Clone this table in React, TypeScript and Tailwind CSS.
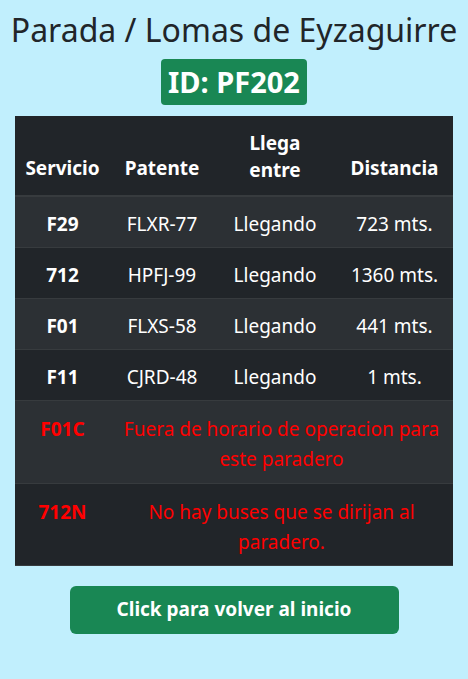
const buses = [
  { servicio: "F29", patente: "FLXR-77", llega: "Llegando", distancia: "723 mts." },
  { servicio: "712", patente: "HPFJ-99", llega: "Llegando", distancia: "1360 mts." },
  { servicio: "F01", patente: "FLXS-58", llega: "Llegando", distancia: "441 mts." },
  { servicio: "F11", patente: "CJRD-48", llega: "Llegando", distancia: "1 mts." },
];

const errores = [
  { servicio: "F01C", mensaje: "Fuera de horario de operacion para este paradero", h: "h-[83px]" },
  { servicio: "712N", mensaje: "No hay buses que se dirijan al paradero.", h: "h-[82px]" },
];

export default function App() {
  let stripe = 0;
  const rowBg = () => (stripe++ % 2 === 0 ? "bg-[#2c3034]" : "bg-[#212529]");

  return (
    <div
      className="min-h-screen bg-[#c1effd] flex flex-col items-center"
      style={{ fontFamily: '"Noto Sans", "Open Sans", sans-serif' }}
    >
      <h2 className="mt-[10px] text-[32px] leading-[40px] text-[#212529]">
        Parada / Lomas de Eyzaguirre
      </h2>
      <div className="mt-[9px] h-[46px] px-[7px] flex items-center rounded-[4px] bg-[#198754] text-white text-[29px] font-bold">
        ID: PF202
      </div>
      <table className="mt-[11px] w-[438px] text-white text-[19px] leading-[27px] text-center border-collapse border-b border-[#373b3e]">
        <thead className="bg-[#212529]">
          <tr className="h-[80px]">
            <th className="w-[95px] px-[4px] pt-[26px] font-bold">Servicio</th>
            <th className="w-[104px] px-[4px] pt-[26px] font-bold">Patente</th>
            <th className="w-[122px] px-[4px] pt-[2px] font-bold">
              Llega
              <br />
              entre
            </th>
            <th className="px-[4px] pt-[26px] font-bold">Distancia</th>
          </tr>
        </thead>
        <tbody>
          {buses.map((b, i) => (
            <tr
              key={b.servicio}
              className={`h-[51px] ${i === 0 ? "border-t-2" : "border-t"} border-[#373b3e] ${rowBg()}`}
            >
              <td className="pt-[5px] font-bold">{b.servicio}</td>
              <td className="pt-[5px]">{b.patente}</td>
              <td className="pt-[5px]">{b.llega}</td>
              <td className="pt-[5px]">{b.distancia}</td>
            </tr>
          ))}
          {errores.map((e) => (
            <tr
              key={e.servicio}
              className={`${e.h} border-t border-[#373b3e] text-[#ff0000] leading-[30px] ${rowBg()}`}
            >
              <td className="font-bold align-top pt-[13px]">{e.servicio}</td>
              <td colSpan={3} className="align-top pt-[13px] px-[4px]">
                {e.mensaje}
              </td>
            </tr>
          ))}
        </tbody>
      </table>
      <button className="mt-[20px] w-[329px] h-[48px] rounded-[6px] bg-[#198754] text-white text-[19px] font-bold">
        Click para volver al inicio
      </button>
    </div>
  );
}
